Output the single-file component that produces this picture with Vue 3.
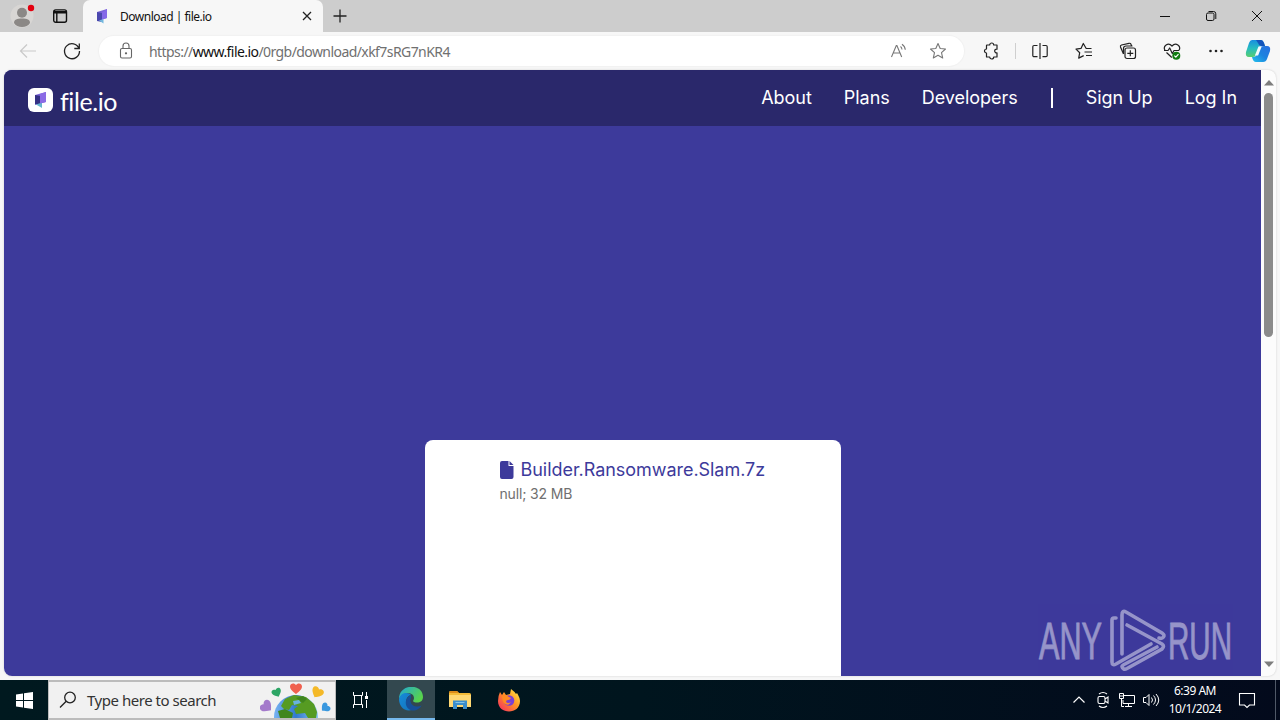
<template>
  <div class="desktop">
    <header class="titlebar">
      <div class="profile">
        <svg width="32" height="32" viewBox="0 0 32 32">
          <circle cx="16" cy="16" r="11.5" fill="#d8d6d4" />
          <circle cx="16" cy="12.8" r="5" fill="#8b8886" />
          <path d="M8 23c0-3.6 3-4.5 8-4.5s8 .9 8 4.5c-1.5 2.6-4.5 4-8 4s-6.5-1.4-8-4z" fill="#8b8886" />
          <circle cx="25" cy="8" r="3.2" fill="#e3000f" />
        </svg>
      </div>
      <div class="workspaces">
        <svg width="16" height="16" viewBox="0 0 16 16" fill="none" stroke="#111" stroke-width="1.4">
          <rect x="1.700" y="1.900" width="12.800" height="12.400" rx="2" />
          <path d="M2 3.600h12.500M2 4.700h12.500M4.800 5v9" />
        </svg>
      </div>
      <div class="tab">
        <svg class="tab-logo" width="12" height="16" viewBox="0 0 12 16">
          <path d="M1 4 11 1v9L1 13z" fill="#7a62d8" />
          <path d="M1 4 6 5v9l-5-1z" fill="#4a47ae" />
          <path d="M3 12.500 7.500 11v4.500z" fill="#72b7dd" />
          <path d="M6 4.500 11 1v9L6 11.500z" fill="#8568e8" />
        </svg>
        <span class="tab-title">Download | file.io</span>
        <svg class="tab-close" width="10" height="10" viewBox="0 0 10 10" fill="none" stroke="#222" stroke-width="1.300">
          <path d="M1 1l8 8M9 1 1 9" />
        </svg>
      </div>
      <svg class="new-tab" width="14" height="14" viewBox="0 0 14 14" fill="none" stroke="#222" stroke-width="1.300">
        <path d="M7 .5v13M.5 7h13" />
      </svg>
      <div class="window-controls">
        <span class="control">
          <svg width="12" height="12" viewBox="0 0 12 12" fill="none" stroke="#111"><path d="M1 6.500h10" /></svg>
        </span>
        <span class="control">
          <svg width="12" height="12" viewBox="0 0 12 12" fill="none" stroke="#111">
            <rect x="1.500" y="3" width="7.500" height="7.500" rx="1.500" />
            <path d="M3.500 1.500H8.500a2.300 2.300 0 0 1 2.300 2.300V9" />
          </svg>
        </span>
        <span class="control">
          <svg width="12" height="12" viewBox="0 0 12 12" fill="none" stroke="#111"><path d="M1 1l10 10M11 1 1 11" /></svg>
        </span>
      </div>
    </header>

    <div class="toolbar">
      <span class="tool back">
        <svg width="20" height="20" viewBox="0 0 20 20" fill="none" stroke="#c9c9c9" stroke-width="1.200"><path d="M18 10H2.500M9 3.500 2.500 10 9 16.500" /></svg>
      </span>
      <span class="tool">
        <svg width="20" height="20" viewBox="0 0 20 20" fill="none" stroke="#222" stroke-width="1.300"><path d="M17 7.500A7.500 7.500 0 1 0 17.500 10M17.300 2.500v5h-5" /></svg>
      </span>
      <div class="address">
        <svg class="lock" width="16" height="18" viewBox="0 0 16 18" fill="none" stroke="#666" stroke-width="1.100">
          <rect x="2.500" y="6.500" width="11" height="9.500" rx="1.500" />
          <path d="M5 6.500V4a3 3 0 0 1 6 0v2.500" />
          <circle cx="8" cy="11.300" r=".6" fill="#666" />
        </svg>
        <span class="url">https://<b>www.file.io</b>/0rgb/download/xkf7sRG7nKR4</span>
        <svg class="read-aloud" width="18" height="18" viewBox="0 0 18 18" fill="none" stroke="#777" stroke-width="1.100">
          <path d="M1.500 15 6.300 3.500h.6L11.700 15M3.200 11h6.800M10.500 4.500q1.300 1 1.500 3M12 2.200q3 2 3.300 5.600" />
        </svg>
        <svg class="favorite" width="18" height="18" viewBox="0 0 18 18" fill="none" stroke="#777" stroke-width="1.100" stroke-linejoin="round">
          <path d="M9 1.500l2.200 5 5.300.5-4 3.600 1.200 5.400L9 13.300 4.300 16l1.200-5.400-4-3.600 5.300-.5z" />
        </svg>
      </div>
      <span class="tool extensions">
        <svg width="18" height="18" viewBox="0 0 18 18" fill="none" stroke="#222" stroke-width="1.200" stroke-linejoin="round">
          <path d="M5 3h2.700a2 2 0 0 1 4 0H15v4.200a1.900 1.900 0 1 0 0 3.700V15h-3.300a2 2 0 0 1-4 0H4.500v-4a2 2 0 1 1 0-4V3.500z" />
        </svg>
      </span>
      <span class="separator"></span>
      <span class="tool">
        <svg width="18" height="18" viewBox="0 0 18 18" fill="none" stroke="#222" stroke-width="1.200">
          <path d="M6.500 3.500H3A1.200 1.200 0 0 0 1.800 4.700v8.800A1.200 1.200 0 0 0 3 14.700h3.500M11.500 3.500H15a1.200 1.200 0 0 1 1.200 1.200v8.800a1.200 1.200 0 0 1-1.200 1.200h-3.500M9 1v16" />
        </svg>
      </span>
      <span class="tool">
        <svg width="18" height="18" viewBox="0 0 18 18" fill="none" stroke="#222" stroke-width="1.200" stroke-linejoin="round">
          <path d="M16.500 6.500h-5.300L8.300 1.500 6 6.400l-5 .7L4.700 10.700l-1 5.400 5-2.500M9.500 10h7.500M11 13.500h6" />
        </svg>
      </span>
      <span class="tool">
        <svg width="18" height="18" viewBox="0 0 18 18" fill="none" stroke="#222" stroke-width="1.200">
          <rect x="6" y="6" width="10.500" height="10.500" rx="2" />
          <path d="M11.300 8.300v6M8.300 11.300h6M4.500 12 1.500 5Q1 3.500 2.500 3L10 1.300q1.500-.3 2 1L12.700 4M4.500 12V6.500q0-2.500 2.500-2.500h6.500" />
        </svg>
      </span>
      <span class="tool">
        <svg width="18" height="18" viewBox="0 0 18 18" fill="none" stroke="#222" stroke-width="1.200" stroke-linejoin="round">
          <path d="M2 8.300C-.4 4.300 5-.3 9 4c4-4.300 9.400.3 7 4.300M1 8.500h4l1.700-2.500 2.600 5.500 1.700-3h5M3.500 10.500 8.800 15.500" />
          <circle cx="13.300" cy="13.700" r="4" fill="#107c10" stroke="none" />
          <path d="M11.300 13.700l1.500 1.500 2.700-3" stroke="#fff" />
        </svg>
      </span>
      <span class="tool">
        <svg width="18" height="18" viewBox="0 0 18 18" fill="#222"><circle cx="3.500" cy="9" r="1.300" /><circle cx="9" cy="9" r="1.300" /><circle cx="14.500" cy="9" r="1.300" /></svg>
      </span>
      <span class="tool copilot">
        <svg width="26" height="24" viewBox="0 0 26 24">
          <defs>
            <linearGradient id="copilotLeft" x1="0" y1="0" x2="0" y2="1">
              <stop offset="0" stop-color="#188ee0" />
              <stop offset=".5" stop-color="#27bdbf" />
              <stop offset="1" stop-color="#59ce70" />
            </linearGradient>
            <linearGradient id="copilotRight" x1="0" y1="1" x2="1" y2="0">
              <stop offset="0" stop-color="#24c2ed" />
              <stop offset=".5" stop-color="#1d83df" />
              <stop offset="1" stop-color="#2a6fe0" />
            </linearGradient>
          </defs>
          <path d="M7 1h9q2 0 3 3l1 3h-3q-3 0-4 3l-2 6q-.8 2-3 2H4Q0 18 1 13L4 4q1-3 3-3z" fill="url(#copilotLeft)" />
          <path d="M19 7h3q4 0 3 5l-3 8q-1 3-4 3h-7q-3 0-4-5h2q2 0 3-3l2-6q1-2 5-2z" fill="url(#copilotRight)" />
          <path d="M11 1h5q2 0 3 3l1 3h-4q-2 0-3-3z" fill="#1454bb" />
          <path d="M13.500 7.500h3.200l-3.600 9h-3.200z" fill="#f5fbff" />
        </svg>
      </span>
    </div>

    <div class="viewport">
      <main class="page">
        <nav class="site-nav">
          <div class="brand">
            <svg width="25" height="24" viewBox="0 0 25 24">
              <rect width="25" height="24" rx="6" fill="#fff" />
              <path d="M7 7 18 4v10L7 17z" fill="#7961d7" />
              <path d="M7 7l6 1v9l-6-1z" fill="#353184" />
              <path d="M8 16.500l6-2V20z" fill="#66b5ce" />
              <path d="M12 6l6-2v10l-6 1.500z" fill="#8b6be5" />
            </svg>
            <span class="brand-name">file.io</span>
          </div>
          <div class="links">
            <a v-for="link in siteLinks" :key="link">{{ link }}</a>
            <span class="divider"></span>
            <a v-for="link in accountLinks" :key="link">{{ link }}</a>
          </div>
        </nav>
        <section class="file-card">
          <div class="file-name">
            <svg width="14" height="18" viewBox="0 0 14 18" fill="#3d3a9b">
              <path d="M2 0h6.500v5h5v11a2 2 0 0 1-2 2H2a2 2 0 0 1-2-2V2a2 2 0 0 1 2-2z" />
              <path d="M9.500 0l4 4h-4z" />
            </svg>
            <span>{{ file.name }}</span>
          </div>
          <div class="file-info">{{ file.type }}; {{ file.size }}</div>
        </section>
        <div class="watermark">
          <svg width="212" height="66" viewBox="0 0 212 66">
            <g class="watermark-text">
              <text x="5" y="52" textLength="63" lengthAdjust="spacingAndGlyphs">ANY</text>
              <text x="134" y="52" textLength="64" lengthAdjust="spacingAndGlyphs">RUN</text>
            </g>
            <path d="M82 11h-2q-2 0-2 2v42q0 4 4 2l35-20M88 47V8q0-5 4-3l36 21q3 2 1.500 4T125 31M93 18l35 19q3 2 0 5L93 61.500q-4 2-5-2 0-1 3-2.500l32-17" />
          </svg>
        </div>
      </main>
      <div class="scrollbar">
        <svg width="10" height="6" viewBox="0 0 10 6" fill="#7d7d7d"><path d="M5 0l5 5.500H0z" /></svg>
        <span class="thumb"></span>
        <svg class="scroll-down" width="10" height="6" viewBox="0 0 10 6" fill="#7d7d7d"><path d="M0 .5h10L5 6z" /></svg>
      </div>
    </div>

    <footer class="taskbar">
      <div class="start">
        <svg width="17" height="17" viewBox="0 0 17 17" fill="#fff"><path d="M0 2.500 7 1.400V8H0zM8 1.200 17 0v8H8zM0 9h7v6.500l-7-1zM8 9h9v8l-9-1.300z" /></svg>
      </div>
      <div class="search">
        <svg width="18" height="18" viewBox="0 0 18 18" fill="none" stroke="#222" stroke-width="1.300"><circle cx="11" cy="6.500" r="5.300" /><path d="M7.200 10.300 1 16.500" /></svg>
        <span>Type here to search</span>
        <svg class="globe" width="72" height="37" viewBox="0 0 72 37">
          <defs>
            <linearGradient id="ocean" x1="0" y1="0" x2="1" y2="0">
              <stop offset="0" stop-color="#78b3f2" />
              <stop offset=".5" stop-color="#3179cf" />
              <stop offset="1" stop-color="#8cc5f3" />
            </linearGradient>
            <path id="heart" d="M0 5C-1.500 3.500-6 1-6-2.500c0-3.500 4.500-4 6-1.500 1.500-2.500 6-2 6 1.500C6 1 1.500 3.500 0 5z" />
          </defs>
          <circle cx="36" cy="36" r="22" fill="url(#ocean)" />
          <path d="M25 18l9-4 12 2 8 7 3 8-1 6h-8l-3-5-9 1-2-5 4-3-6-1-3 5-5-1-3-3z" fill="#569b22" />
          <path d="M18 30l7-2 8 4-1 5H20zM36 17l7-2 4 3-4 4z" fill="#3f861e" />
          <path d="M33 20l6-1 2 3-7 2z" fill="#69b3df" />
          <use href="#heart" transform="translate(36 8)" fill="#ef604f" />
          <use href="#heart" transform="translate(17 12) rotate(-25) scale(.8)" fill="#2da565" />
          <use href="#heart" transform="translate(57 12) rotate(30) scale(1)" fill="#f4b928" />
          <use href="#heart" transform="translate(7 26) rotate(-50) scale(1.05)" fill="#a47acb" />
          <use href="#heart" transform="translate(65 27) rotate(50) scale(.8)" fill="#3a98df" />
        </svg>
      </div>
      <div class="task-view">
        <svg width="18" height="18" viewBox="0 0 18 18" fill="none" stroke="#fff">
          <path d="M2.500 1v3.500h9V1M2.500 17v-3.500h9V17M3.500 4.500v9M10.500 4.500v9M15.500 1v4M15.500 9v8" />
          <path d="M14 5h3v3h-3z" fill="#fff" stroke="none" />
        </svg>
      </div>
      <div class="app active">
        <svg width="24" height="24" viewBox="0 0 24 24">
          <defs>
            <linearGradient id="edgeWave" x1="0" y1="0" x2="1" y2=".5">
              <stop offset="0" stop-color="#20a7d8" />
              <stop offset="1" stop-color="#58d34c" />
            </linearGradient>
            <linearGradient id="edgeBlue" x1="0" y1="0" x2="1" y2="1">
              <stop offset="0" stop-color="#168bda" />
              <stop offset="1" stop-color="#1473bb" />
            </linearGradient>
          </defs>
          <path d="M0 12C0-4 24-4 24 10c0 5-5 6.500-9 5-2-1 0-1.500 0-4 0-7-12-6-15 1z" fill="url(#edgeWave)" />
          <path d="M0 12C2 5 9 5 12 8 6 9 5 19 13 23 5 25 0 19 0 12z" fill="url(#edgeBlue)" />
          <path d="M12 8c-8 4-6 14 1 15.500 4 .5 8-2 9.500-5-5 2.500-10 .5-11-4-.5-2.500 1-3 .5-6.500z" fill="#174f99" />
        </svg>
      </div>
      <div class="app">
        <svg width="22" height="20" viewBox="0 0 22 20">
          <path d="M0 2.500Q0 1 1.500 1H8l2 2h10.500q1.500 0 1.500 1.500V17H0z" fill="#f4bb38" />
          <path d="M0 2.500Q0 1 1.500 1H8l2 2H0z" fill="#dd8c19" />
          <path d="M0 5h22v12H0z" fill="#ffd873" />
          <path d="M4 19v-8.500h14V19h-4v-4H8v4z" fill="#3a8dcc" />
          <path d="M6.500 12.500h9" stroke="#83c3e9" />
        </svg>
      </div>
      <div class="app">
        <svg width="24" height="24" viewBox="0 0 24 24">
          <defs>
            <linearGradient id="flame" x1="1" y1="0" x2="0" y2="1">
              <stop offset="0" stop-color="#fff34d" />
              <stop offset=".45" stop-color="#ff9423" />
              <stop offset="1" stop-color="#f52467" />
            </linearGradient>
          </defs>
          <path d="M3 4l2 3 2-3 2 3 4-1 1-5q4 3 5 5l1-1q3 5 3 8c0 14-22 14-22 0Q1 8 3 4z" fill="url(#flame)" />
          <circle cx="12" cy="12.500" r="5.300" fill="#7940d5" />
          <path d="M5 8q4-2 7 1l2 1q-1 2-3 2t-2 2q2 2 5 0-2 4-6 2-3-3-3-8z" fill="#ff8b22" />
        </svg>
      </div>
      <div class="tray">
        <span class="tray-icon">
          <svg width="14" height="14" viewBox="0 0 14 14" fill="none" stroke="#fff" stroke-width="1.200"><path d="M1.500 9.500 7 4l5.500 5.500" /></svg>
        </span>
        <span class="tray-icon">
          <svg width="14" height="18" viewBox="0 0 14 18" fill="none" stroke="#fff" stroke-width="1.100"><rect x="2" y="5.500" width="7" height="7" rx="1.500" /><path d="M9 8l3-2v6L9 10M3 3q4-3 8 0M3 15q4 3 8 0" /></svg>
        </span>
        <span class="tray-icon">
          <svg width="18" height="16" viewBox="0 0 18 16" fill="none" stroke="#fff"><path d="M6 3.500h10.500v8H5V8M10.500 11.500v3M7 14.500h7M1.500 1.500h4v5h-4zM2 4h3M3.500 6.500v8H6" /></svg>
        </span>
        <span class="tray-icon">
          <svg width="18" height="16" viewBox="0 0 18 16" fill="none" stroke="#fff"><path d="M1.500 5.500h2.500L7 2.500v11l-3-3H1.500zM9.500 5.500q2 2.500 0 5M11.500 3.500q4 4.500 0 9M14 2q5.500 6 0 12" /></svg>
        </span>
        <div class="clock">
          <span class="time">6:39 AM</span>
          <span class="date">10/1/2024</span>
        </div>
        <span class="notifications">
          <svg width="18" height="18" viewBox="0 0 18 18" fill="none" stroke="#fff" stroke-width="1.100"><path d="M1.500 2.500h15V14h-5L9 16.500 6.500 14h-5z" /></svg>
        </span>
        <span class="show-desktop"></span>
      </div>
    </footer>
  </div>
</template>

<script setup>
const siteLinks = ['About', 'Plans', 'Developers']
const accountLinks = ['Sign Up', 'Log In']

const file = {
  name: 'Builder.Ransomware.Slam.7z',
  type: 'null',
  size: '32 MB',
}
</script>

<style>
body {
  margin: 0;
  overflow: hidden;
}
</style>

<style scoped>
.desktop {
  display: flex;
  flex-direction: column;
  width: 1280px;
  height: 720px;
  background: #f7f7f7;
  font-family: 'Noto Sans', 'Open Sans', sans-serif;
}

svg {
  display: block;
  flex-shrink: 0;
}

/* browser title bar */
.titlebar {
  display: flex;
  align-items: center;
  height: 32px;
  background: #cdcdcd;
}
.profile {
  width: 44px;
  padding-left: 6px;
  box-sizing: border-box;
}
.workspaces {
  padding: 0 15px 0 8px;
}
.tab {
  display: flex;
  align-items: center;
  width: 240px;
  height: 32px;
  box-sizing: border-box;
  padding: 0 11px 0 13px;
  background: #f7f7f7;
  border-radius: 7px 7px 0 0;
}
.tab-title {
  flex: 1;
  margin-left: 12px;
  font-size: 12px;
  letter-spacing: -0.5px;
  white-space: nowrap;
  color: #111;
}
.new-tab { margin-left: 10px; }
.window-controls {
  display: flex;
  margin-left: auto;
}
.control {
  display: flex;
  justify-content: center;
  width: 46px;
}

/* address bar and tools */
.toolbar {
  display: flex;
  align-items: center;
  height: 38px;
}
.tool {
  display: flex;
  justify-content: center;
  width: 44px;
}
.tool.back { margin-left: 6px; }
.address {
  display: flex;
  align-items: center;
  width: 865px;
  height: 30px;
  margin-left: 5px;
  border-radius: 15px;
  background: #fff;
  box-shadow: 0 0 1px 1px #f1f1f1;
}
.lock { margin-left: 19px; }
.url {
  margin-left: 15px;
  font-size: 14px;
  letter-spacing: -0.57px;
  color: #707070;
}
.url b {
  font-weight: 400;
  color: #111;
}
.read-aloud { margin-left: auto; }
.favorite { margin: 0 17px 0 21px; }
.extensions { margin-left: 5px; }
.separator {
  width: 1px;
  height: 16px;
  margin: 0 2px;
  background: #cfcfcf;
}
.tool.copilot { width: 40px; }

/* page */
.viewport {
  display: flex;
  height: 606px;
  margin: 0 4px 4px;
  overflow: hidden;
  border-radius: 8px;
  background: #fcfcfc;
  box-shadow: 0 0 2px #c8c8c8;
}
.page {
  position: relative;
  width: 1257px;
  background: #3d3a9b;
  font-family: Inter, sans-serif;
}
.site-nav {
  display: flex;
  justify-content: space-between;
  height: 56px;
  box-sizing: border-box;
  padding: 0 24px;
  background: #2a286b;
  color: #fff;
}
.brand {
  display: flex;
  align-items: center;
  gap: 7px;
  padding-top: 4px;
}
.brand-name {
  padding-top: 1px;
  font-family: Lato, sans-serif;
  font-size: 25px;
  line-height: 30px;
  letter-spacing: -0.4px;
}
.links {
  display: flex;
  align-items: center;
  gap: 32px;
  font-size: 18px;
  line-height: 28px;
  letter-spacing: -0.03px;
}
.divider {
  width: 2px;
  height: 20px;
  margin: 0 1px;
  background: #fff;
}
.file-card {
  width: 416px;
  height: 236px;
  box-sizing: border-box;
  margin: 314px auto 0;
  padding: 16px 75px;
  border-radius: 8px 8px 0 0;
  background: #fff;
}
.file-name {
  display: flex;
  align-items: center;
  gap: 7px;
  height: 27px;
  color: #3d3a9b;
  font-size: 18px;
  letter-spacing: -0.04px;
  white-space: nowrap;
}
.file-info {
  margin-top: 1px;
  font-size: 14px;
  line-height: 20px;
  letter-spacing: -0.15px;
  color: #707070;
}
.watermark {
  position: absolute;
  right: 15px;
  bottom: 3px;
  opacity: 0.46;
}
.watermark path {
  fill: none;
  stroke: #fff;
  stroke-width: 3.6;
  stroke-linecap: round;
}
.watermark-text {
  fill: #fff;
  stroke: #fff;
  stroke-width: 0.8;
  font: 51px 'Liberation Sans Narrow', 'Liberation Sans', sans-serif;
}
.scrollbar {
  display: flex;
  flex-direction: column;
  align-items: center;
  width: 15px;
  box-sizing: border-box;
  padding: 10px 0 9px;
}
.thumb {
  width: 9px;
  height: 244px;
  margin-top: 7px;
  border-radius: 5px;
  background: #8b8b8b;
}
.scroll-down { margin-top: auto; }

/* taskbar */
.taskbar {
  display: flex;
  height: 40px;
  background: linear-gradient(90deg, #00191f, #00151e 50%, #030a1c);
  color: #fff;
}
.start,
.task-view,
.app {
  display: flex;
  align-items: center;
  justify-content: center;
}
.start { width: 48px; }
.search {
  display: flex;
  align-items: center;
  width: 288px;
  height: 40px;
  box-sizing: border-box;
  padding-left: 10px;
  border: 1px solid #bcbcbc;
  border-width: 2px 1px;
  background: #f1f1f1;
  color: #333;
  font-size: 15px;
}
.search span {
  margin-left: 10px;
  letter-spacing: -0.47px;
  white-space: nowrap;
}
.globe {
  align-self: flex-end;
  margin-left: auto;
  margin-right: 3px;
}
.task-view { width: 48px; }
.task-view + .app { margin-left: 3px; }
.app {
  width: 48px;
  margin-right: 1px;
  box-sizing: border-box;
}
.app.active {
  border-bottom: 2px solid #76b9ed;
  background: #33484f;
}
.tray {
  display: flex;
  align-items: center;
  margin-left: auto;
}
.tray-icon {
  display: flex;
  justify-content: center;
  width: 24px;
}
.clock {
  display: flex;
  flex-direction: column;
  align-items: center;
  width: 64px;
  font-size: 12px;
  line-height: 18px;
  white-space: nowrap;
}
.time,
.date {
  letter-spacing: -0.5px;
}
.notifications {
  display: flex;
  justify-content: center;
  width: 40px;
}
.show-desktop {
  width: 4px;
  height: 40px;
  margin-left: 8px;
  border-left: 1px solid #505968;
}
</style>
